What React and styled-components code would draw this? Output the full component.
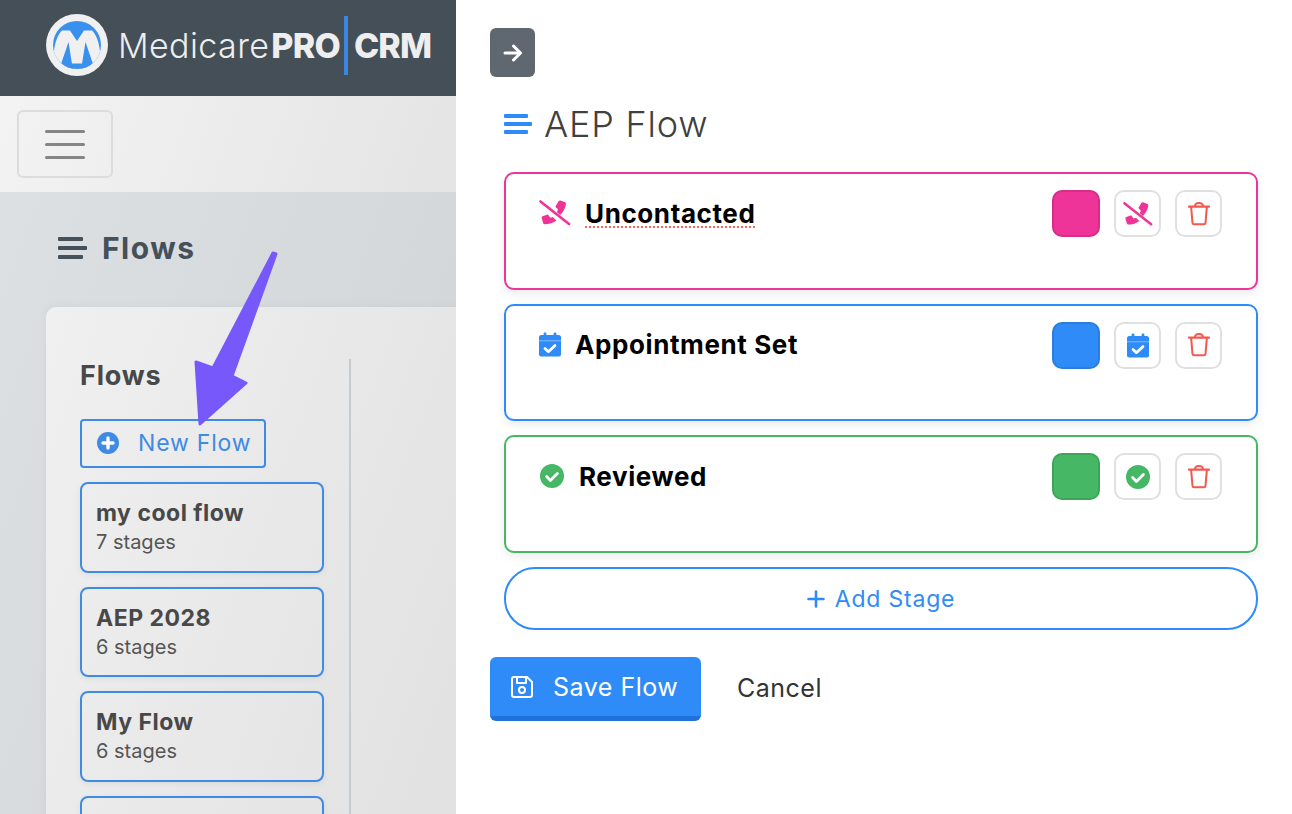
import React from "react";
import styled, { createGlobalStyle } from "styled-components";

const Font = `"Inter", "Liberation Sans", sans-serif`;

const Global = createGlobalStyle`
  html, body { margin: 0; padding: 0; }
  body { font-family: ${Font}; background: #fff; }
  * { box-sizing: border-box; }
`;

const Page = styled.div`
  position: relative;
  display: flex;
  width: 1292px;
  height: 814px;
  overflow: hidden;
`;

const Left = styled.div`
  width: 456px;
  flex: none;
  display: flex;
  flex-direction: column;
  background: linear-gradient(110deg, #dde1e4, #d0d4d7);
  overflow: hidden;
`;

const Brand = styled.div`
  height: 96px;
  flex: none;
  background: #444f58;
  display: flex;
  align-items: center;
  padding: 0 0 6px 46px;
`;

const LogoMark = styled.svg`
  width: 62px;
  height: 62px;
  flex: none;
  margin-right: 10px;
`;

const LogoText = styled.span`
  font-size: 34px;
  letter-spacing: 0.4px;
  font-weight: 300;
  color: #eee;
`;

const LogoBold = styled.b`
  font-weight: 800;
  letter-spacing: -0.8px;
  margin-left: 2px;
`;

const LogoBar = styled.i`
  display: block;
  width: 4px;
  height: 59px;
  margin: 0 4px 0 4px;
  background: #3a86e0;
`;

const Navbar = styled.div`
  height: 96px;
  flex: none;
  background: linear-gradient(110deg, #f3f3f3, #e4e4e4);
  padding: 14px 17px;
`;

const Toggler = styled.div`
  width: 96px;
  height: 68px;
  border: 2px solid #dcdcdc;
  border-radius: 6px;
  display: flex;
  flex-direction: column;
  align-items: center;
  justify-content: center;
  gap: 10px;
`;

const TogglerLine = styled.span`
  width: 40px;
  height: 3px;
  border-radius: 2px;
  background: #858585;
`;

const Content = styled.div`
  padding: 36px 0 0 46px;
`;

const PageTitle = styled.div`
  display: flex;
  align-items: center;
  gap: 15px;
  height: 40px;
  padding-left: 12px;
  margin-bottom: 39px;
  font-size: 30px;
  font-weight: 700;
  letter-spacing: 1.5px;
  color: #44505a;
`;

const Panel = styled.div`
  display: flex;
  width: 500px;
  height: 600px;
  border-radius: 10px 0 0 0;
  background: linear-gradient(110deg, #f0f0f0, #dedede);
  padding: 52px 0 0 34px;
  box-shadow: 0 0 10px rgba(0, 0, 0, 0.05);
`;

const ListColumn = styled.div`
  width: 271px;
  flex: none;
  padding-right: 25px;
  border-right: 2px solid #c6cbd0;
`;

const ListTitle = styled.div`
  font-size: 27px;
  line-height: 33px;
  font-weight: 700;
  letter-spacing: 0.8px;
  color: #484848;
  margin-bottom: 27px;
`;

const NewFlow = styled.div`
  display: flex;
  align-items: center;
  width: 186px;
  height: 49px;
  padding: 0 0 2px 15px;
  gap: 19px;
  border: 2px solid #3f8ae2;
  border-radius: 4px;
  font-size: 23px;
  letter-spacing: 0.8px;
  color: #3f8ae2;
  margin-bottom: 14px;
`;

const FlowCard = styled.div`
  height: 90.67px;
  border: 2px solid #3f8ae2;
  border-radius: 8px;
  padding: 15px 14px 0;
  margin-bottom: 14px;
  box-shadow: 0 2px 6px rgba(0, 0, 0, 0.06);
`;

const FlowName = styled.div`
  font-size: 23px;
  line-height: 29px;
  font-weight: 700;
  letter-spacing: 0.5px;
  color: #484848;
`;

const FlowCount = styled.div`
  font-size: 20px;
  line-height: 28px;
  color: #555;
`;

const Pointer = styled.svg`
  position: absolute;
  left: 180px;
  top: 240px;
  width: 110px;
  height: 200px;
`;

const Right = styled.div`
  flex: 1;
  background: #fff;
  padding: 28px 34px 0;
`;

const BackButton = styled.div`
  width: 45px;
  height: 49px;
  border-radius: 6px;
  background: #5f6870;
  display: flex;
  align-items: center;
  justify-content: center;
  margin-bottom: 25px;
`;

const FlowTitle = styled.div`
  display: flex;
  align-items: center;
  gap: 12px;
  height: 44px;
  padding-left: 14px;
  margin-bottom: 26px;
  font-size: 36px;
  font-weight: 300;
  letter-spacing: 0.8px;
  color: #404040;
`;

const Stages = styled.div`
  display: flex;
  flex-direction: column;
  gap: 14px;
  margin-left: 14px;
  width: 754px;
`;

const Stage = styled.div`
  display: flex;
  justify-content: space-between;
  height: 117.67px;
  padding: 16px 34px 0 ${(p) => p.$pad}px;
  border: 2px solid ${(p) => p.$color};
  border-radius: 10px;
  box-shadow: 0 4px 10px rgba(0, 0, 0, 0.08);
`;

const StageName = styled.div`
  display: flex;
  align-items: center;
  height: 46px;
  align-self: flex-start;
  gap: ${(p) => p.$gap}px;
  font-size: 26px;
  font-weight: 700;
  letter-spacing: 0.6px;
  color: #000;
`;

const Squiggle = styled.span`
  text-decoration: underline dotted #f4665a 2px;
  text-underline-offset: 4px;
`;

const StageTools = styled.div`
  display: flex;
  gap: 14px;
`;

const Swatch = styled.div`
  width: 48px;
  height: 47px;
  border-radius: 10px;
  background: ${(p) => p.$color};
  border: 2px solid rgba(0, 0, 0, 0.1);
`;

const IconButton = styled.div`
  width: 47px;
  height: 47px;
  border-radius: 10px;
  border: 2px solid #e0e0e0;
  display: flex;
  align-items: center;
  justify-content: center;
`;

const AddStage = styled.div`
  height: 63px;
  padding-top: 2px;
  border: 2px solid #2f8bf7;
  border-radius: 31px;
  display: flex;
  align-items: center;
  justify-content: center;
  gap: 10px;
  font-size: 23px;
  letter-spacing: 0.8px;
  color: #2f8bf7;
`;

const Actions = styled.div`
  display: flex;
  align-items: center;
  margin-top: 27px;
`;

const SaveButton = styled.div`
  display: flex;
  align-items: center;
  gap: 20px;
  width: 211px;
  height: 64px;
  padding: 2px 0 0 21px;
  border-radius: 6px;
  background: #2f8bf7;
  border-bottom: 5px solid #1f72dc;
  font-size: 25px;
  letter-spacing: 0.5px;
  color: #fff;
`;

const CancelButton = styled.div`
  margin-left: 36px;
  padding-bottom: 2px;
  font-size: 25px;
  letter-spacing: 0.5px;
  color: #333;
`;

const Bars = ({ color, w, h, t }) => (
  <svg width={w} height={h} viewBox={`0 0 ${w} ${h}`} fill={color}>
    <rect x="0" y="0" width={w - 4} height={t} rx="1" />
    <rect x="0" y={(h - t) / 2} width={w} height={t} rx="1" />
    <rect x="0" y={h - t} width={w - 4} height={t} rx="1" />
  </svg>
);

const PhoneSlash = ({ color, size }) => (
  <svg width={size} height={size} viewBox="0 0 32 28" fill={color}>
    <path d="M21.5 1.500l4.600 1.700c.7.3 1 .9.9 1.600-.6 4.500-2.700 8.300-5.800 11.300l-3.400-3.200c.8-.8 1.100-1.800 1-2.900l-1.900-1.600c-.4-.4-.5-1-.2-1.400l3-4.900c.4-.6 1.100-.8 1.800-.6z" />
    <path d="M3.600 17.300l4.400-1.600c.5-.2 1.100 0 1.400.4l1.600 2.400c.9.2 1.900 0 2.700-.5l3.700 3.400c-3.400 2.500-7.100 3.800-11.600 3.900-.7 0-1.400-.4-1.600-1.100l-1.500-5c-.2-.8.1-1.500.9-1.900z" />
    <path d="M1.500 2.500L30 25" stroke={color} strokeWidth="2.600" strokeLinecap="round" fill="none" />
  </svg>
);

const CalendarCheck = ({ color, size }) => (
  <svg width={size} height={size * 25 / 22} viewBox="0 0 22 25">
    <path fill={color} d="M6 .5c.9 0 1.400.5 1.400 1.300v1.200h7.200V1.800c0-.8.5-1.300 1.400-1.300s1.400.5 1.400 1.300V3h2.400C21 3 22 4 22 5v17.500c0 1-1 2-2 2H2c-1 0-2-1-2-2V5c0-1 1-2 2-2h2.600V1.800C4.600 1 5.100.5 6 .5z" />
    <path d="M0 8.800h22" stroke="#fff" strokeOpacity="0.55" strokeWidth="0.8" />
    <path d="M6 16.600l3.400 3.200 6.600-6.200" fill="none" stroke="#fff" strokeWidth="2.800" strokeLinecap="round" strokeLinejoin="round" />
  </svg>
);

const CircleCheck = ({ color, size }) => (
  <svg width={size} height={size} viewBox="0 0 24 24">
    <circle cx="12" cy="12" r="12" fill={color} />
    <path d="M6.600 12.600l3.800 3.800 7-7" fill="none" stroke="#fff" strokeWidth="2.800" strokeLinecap="round" strokeLinejoin="round" />
  </svg>
);

const Trash = () => (
  <svg width="22" height="24" viewBox="0 0 24 26" preserveAspectRatio="none" fill="none" stroke="#f2594f" strokeWidth="2.200" strokeLinejoin="round">
    <path d="M1 5h22" strokeLinecap="round" />
    <path d="M3.400 5l1.500 17.600c.1 1 .9 1.600 1.800 1.600h10.600c.9 0 1.700-.6 1.800-1.600L20.600 5" />
    <path d="M7.600 5c0-2.600 1.400-3.800 4.400-3.800s4.400 1.200 4.400 3.800" />
  </svg>
);

const flows = [
  { name: "my cool flow", count: "7 stages" },
  { name: "AEP 2028", count: "6 stages" },
  { name: "My Flow", count: "6 stages" },
  { name: "", count: "" },
];

const stages = [
  { name: "Uncontacted", color: "#ee3399", Icon: PhoneSlash, pad: 33, gap: 14, size: 32, toolSize: 30, flag: true },
  { name: "Appointment Set", color: "#2f8bf7", Icon: CalendarCheck, pad: 33, gap: 14, size: 22, toolSize: 22 },
  { name: "Reviewed", color: "#45b765", Icon: CircleCheck, pad: 34, gap: 15, size: 24, toolSize: 24 },
];

export default function App() {
  return (
    <Page>
      <Global />
      <Left>
        <Brand>
          <LogoMark viewBox="0 0 62 62">
            <defs>
              <clipPath id="logoDisc">
                <circle cx="31" cy="31" r="24" />
              </clipPath>
            </defs>
            <circle cx="31" cy="31" r="31" fill="#f0f0f0" />
            <g clipPath="url(#logoDisc)">
              <rect x="0" y="0" width="62" height="62" fill="#3a90ee" />
              <path fill="#f0f0f0" d="M8 37C9 28 12 20 16 16.500L24 16.500L31 27L38 16.500L46 16.500C50 20 53 28 54 37V60H8z" />
              <path fill="#3a90ee" d="M22.500 28L13 56H27z" />
              <path fill="#3a90ee" d="M39.500 28L49 56H35z" />
              <rect x="0" y="49.500" width="62" height="12" fill="#3a90ee" />
            </g>
          </LogoMark>
          <LogoText>Medicare<LogoBold>PRO</LogoBold></LogoText>
          <LogoBar />
          <LogoText><LogoBold>CRM</LogoBold></LogoText>
        </Brand>
        <Navbar>
          <Toggler>
            <TogglerLine />
            <TogglerLine />
            <TogglerLine />
          </Toggler>
        </Navbar>
        <Content>
          <PageTitle>
            <Bars color="#44505a" w={29} h={22} t={4} />
            Flows
          </PageTitle>
          <Panel>
            <ListColumn>
              <ListTitle>Flows</ListTitle>
              <NewFlow>
                <svg width="22" height="22" viewBox="0 0 22 22">
                  <circle cx="11" cy="11" r="11" fill="#3f8ae2" />
                  <path d="M11 6v10M6 11h10" stroke="#fff" strokeWidth="3.400" strokeLinecap="round" />
                </svg>
                New Flow
              </NewFlow>
              {flows.map((f, i) => (
                <FlowCard key={i}>
                  <FlowName>{f.name}</FlowName>
                  <FlowCount>{f.count}</FlowCount>
                </FlowCard>
              ))}
            </ListColumn>
          </Panel>
        </Content>
      </Left>
      <Pointer viewBox="180 240 110 200">
        <path
          fill="#7658fb"
          stroke="#7658fb"
          strokeWidth="3"
          strokeLinejoin="round"
          d="M273 253L276 254L232 376L246 383L200 424L196 362L213 368z"
        />
      </Pointer>
      <Right>
        <BackButton>
          <svg width="20" height="20" viewBox="0 0 20 20" fill="none" stroke="#fff" strokeWidth="3" strokeLinecap="round" strokeLinejoin="round">
            <path d="M2 10h15M10.500 3l7 7-7 7" />
          </svg>
        </BackButton>
        <FlowTitle>
          <Bars color="#2f8bf7" w={28} h={20} t={4} />
          AEP Flow
        </FlowTitle>
        <Stages>
          {stages.map((s) => (
            <Stage key={s.name} $color={s.color} $pad={s.pad}>
              <StageName $gap={s.gap}>
                <s.Icon color={s.color} size={s.size} />
                {s.flag ? <Squiggle>{s.name}</Squiggle> : s.name}
              </StageName>
              <StageTools>
                <Swatch $color={s.color} />
                <IconButton>
                  <s.Icon color={s.color} size={s.toolSize} />
                </IconButton>
                <IconButton>
                  <Trash />
                </IconButton>
              </StageTools>
            </Stage>
          ))}
          <AddStage>
            <svg width="18" height="18" viewBox="0 0 18 18" stroke="#2f8bf7" strokeWidth="2.600" strokeLinecap="round">
              <path d="M9 1.500v15M1.500 9h15" />
            </svg>
            Add Stage
          </AddStage>
        </Stages>
        <Actions>
          <SaveButton>
            <svg width="22" height="22" viewBox="0 0 22 22" fill="none" stroke="#fff" strokeWidth="2" strokeLinejoin="round">
              <path d="M3 1h13l5 5v13c0 1-1 2-2 2H3c-1 0-2-1-2-2V3c0-1 1-2 2-2z" />
              <path d="M6 1v6h9V1" />
              <circle cx="11" cy="14" r="3" />
            </svg>
            Save Flow
          </SaveButton>
          <CancelButton>Cancel</CancelButton>
        </Actions>
      </Right>
    </Page>
  );
}
